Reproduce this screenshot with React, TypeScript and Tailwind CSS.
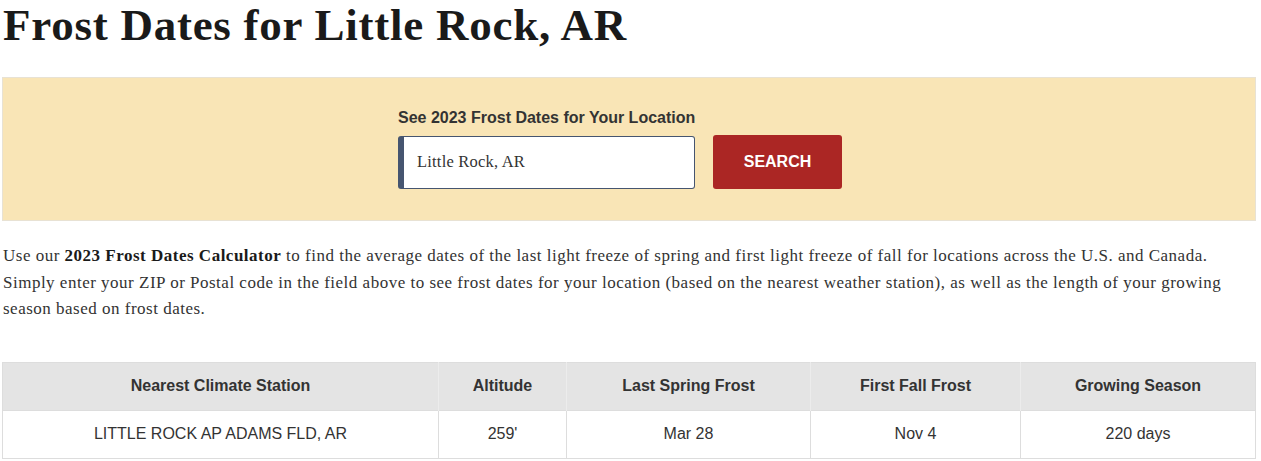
import React from "react";

const serif = { fontFamily: '"Liberation Serif", "Times New Roman", serif' };
const sans = { fontFamily: '"Liberation Sans", Arial, sans-serif' };

export default function App() {
  return (
    <div className="w-[1261px] h-[461px] overflow-hidden bg-white text-[#333]">
      <div className="w-[1254px] ml-[2px]">
        <h1
          className="text-[45px] font-bold leading-[52px] text-[#1a1a1a] mt-[-1px] ml-[1px] tracking-[0.75px]"
          style={serif}
        >
          Frost Dates for Little Rock, AR
        </h1>
        <div className="mt-[26px] h-[144px] bg-[#f9e5b6] border border-[#e8e2d4] pl-[395px]">
          <div className="pt-[30px]">
            <div className="text-[16px] font-bold text-[#333] leading-[20px]" style={sans}>
              See 2023 Frost Dates for Your Location
            </div>
            <div className="mt-[7px] flex items-start gap-[18px]">
              <div
                className="w-[297px] h-[53px] mt-[1px] bg-white border border-[#465570] border-l-[6px] rounded-[3px] flex items-center pl-[13px] text-[16.5px] tracking-[0.2px] text-[#333]"
                style={serif}
              >
                Little Rock, AR
              </div>
              <button
                className="w-[129px] h-[54px] bg-[#ab2624] rounded-[3px] text-white text-[16px] font-bold"
                style={sans}
              >
                SEARCH
              </button>
            </div>
          </div>
        </div>
        <p
          className="mt-[22px] ml-[1px] text-[17px] leading-[26.5px] tracking-[0.5px] text-[#333]"
          style={serif}
        >
          Use our <b className="text-[#1a1a1a]">2023 Frost Dates Calculator</b> to find the average dates of the last light freeze of spring and first light freeze of fall for locations across the U.S. and Canada. Simply enter your ZIP or Postal code in the field above to see frost dates for your location (based on the nearest weather station), as well as the length of your growing season based on frost dates.
        </p>
        <table
          className="mt-[39px] w-[1254px] border-collapse border border-[#dddddd] text-[16px] text-[#333]"
          style={sans}
        >
          <thead>
            <tr className="bg-[#e4e4e4] h-[48px]">
              <th className="w-[436px] font-bold border-r border-[#ececec]">Nearest Climate Station</th>
              <th className="w-[128px] font-bold border-r border-[#ececec]">Altitude</th>
              <th className="w-[244px] font-bold border-r border-[#ececec]">Last Spring Frost</th>
              <th className="w-[210px] font-bold border-r border-[#ececec]">First Fall Frost</th>
              <th className="font-bold">Growing Season</th>
            </tr>
          </thead>
          <tbody>
            <tr className="h-[48px] text-center">
              <td className="border border-[#dddddd]">LITTLE ROCK AP ADAMS FLD, AR</td>
              <td className="border border-[#dddddd]">259'</td>
              <td className="border border-[#dddddd]">Mar 28</td>
              <td className="border border-[#dddddd]">Nov 4</td>
              <td className="border border-[#dddddd]">220 days</td>
            </tr>
          </tbody>
        </table>
      </div>
    </div>
  );
}
